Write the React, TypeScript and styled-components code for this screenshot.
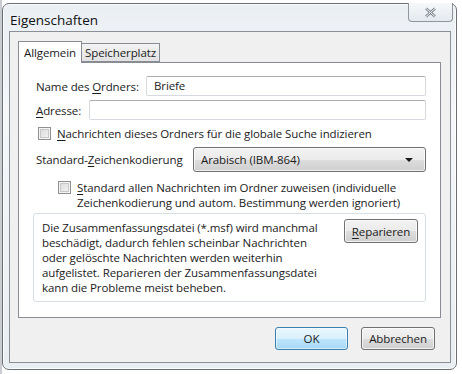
import styled, { createGlobalStyle } from "styled-components";

const GlobalStyle = createGlobalStyle`
  html, body {
    margin: 0;
    padding: 0;
    background: #ffffff;
  }
  body {
    font-family: "Open Sans", "Noto Sans", "Liberation Sans", sans-serif;
    font-size: 11.5px;
    letter-spacing: -0.1px;
    color: #1b1b1b;
  }
`;

const Screen = styled.div`
  width: 462px;
  height: 374px;
  overflow: hidden;
  background: linear-gradient(90deg, #c9ccd0 0, #c9ccd0 2px, #ffffff 2px);
  padding: 3px 0 0 2px;
  box-sizing: border-box;
`;

const Frame = styled.div`
  width: 455px;
  height: 367px;
  box-sizing: border-box;
  border: 1px solid #6b6f74;
  border-radius: 7px;
  background: linear-gradient(180deg, #eaeff4 0%, #f5f7f9 30%, #e9eef2 100%);
  box-shadow: inset 0 0 0 1px rgba(255, 255, 255, 0.8);
  display: flex;
  flex-direction: column;
`;

const TitleBar = styled.div`
  height: 27px;
  display: flex;
  align-items: flex-start;
  justify-content: space-between;
`;

const Title = styled.div`
  padding: 7px 0 0 7px;
  font-size: 13.5px;
  letter-spacing: 0;
  color: #111;
`;

const CloseButton = styled.div`
  width: 45px;
  height: 19px;
  margin-right: 3px;
  margin-top: -1px;
  box-sizing: border-box;
  border: 1px solid #8e959c;
  border-top: none;
  border-radius: 0 0 4px 4px;
  background: linear-gradient(180deg, #f6f8fa, #e4e9ee);
  display: flex;
  align-items: center;
  justify-content: center;
`;

const Client = styled.div`
  flex: 1;
  margin: 0 5px 6px 6px;
  border: 1px solid #8a9096;
  background: #f0f0f0;
  padding: 9px 10px 0 8px;
  display: flex;
  flex-direction: column;
`;

const TabStrip = styled.div`
  display: flex;
  align-items: flex-end;
  height: 21px;
  position: relative;
  z-index: 1;
`;

const Tab = styled.div<{ $active?: boolean; $w: number }>`
  box-sizing: border-box;
  width: ${(p) => p.$w}px;
  height: ${(p) => (p.$active ? "22px" : "19px")};
  margin-bottom: ${(p) => (p.$active ? "-1px" : "0")};
  padding-top: ${(p) => (p.$active ? "2px" : "0")};
  border: 1px solid #898c95;
  border-bottom: ${(p) => (p.$active ? "none" : "1px solid #898c95")};
  border-left: ${(p) => (p.$active ? "1px solid #898c95" : "none")};
  background: ${(p) =>
    p.$active ? "#ffffff" : "linear-gradient(180deg, #f3f3f3, #e2e2e2)"};
  text-align: center;
  line-height: 17px;
`;

const Panel = styled.div`
  width: 423px;
  height: 256px;
  box-sizing: border-box;
  border: 1px solid #898c95;
  background: #ffffff;
  padding: 13px 14px 0 14px;
  display: flex;
  flex-direction: column;
`;

const FieldRow = styled.div<{ $mt?: number }>`
  display: flex;
  align-items: center;
  margin-top: ${(p) => p.$mt ?? 0}px;
  padding-left: 3px;
`;

const Label = styled.span<{ $w: number }>`
  width: ${(p) => p.$w}px;
  flex: none;
  white-space: nowrap;
`;

const U = styled.span`
  text-decoration: underline;
  text-underline-offset: 2px;
`;

const TextInput = styled.div`
  flex: 1;
  height: 20px;
  box-sizing: border-box;
  border: 1px solid #d6dae0;
  border-top-color: #abadb3;
  border-radius: 2px;
  background: #fff;
  padding-left: 7px;
  line-height: 18px;
`;

const CheckRow = styled.div<{ $indent: number; $mt: number }>`
  display: flex;
  align-items: flex-start;
  margin-top: ${(p) => p.$mt}px;
  padding-left: ${(p) => p.$indent}px;
  gap: 6px;
  line-height: 15px;
`;

const Box = styled.span`
  width: 13px;
  height: 13px;
  flex: none;
  box-sizing: border-box;
  border: 1px solid #8e8f8f;
  margin-top: 1px;
  background: linear-gradient(135deg, #d8d8d8, #f6f6f6);
  box-shadow: inset 0 0 0 1px #f4f4f4, inset 0 0 0 2px #c8c8c8;
`;

const SelectBox = styled.div`
  flex: 1;
  height: 25px;
  box-sizing: border-box;
  border: 1px solid #707070;
  border-radius: 3px;
  background: linear-gradient(180deg, #f2f2f2 0%, #ebebeb 50%, #dddddd 51%, #cfcfcf 100%);
  box-shadow: inset 0 0 0 1px rgba(255, 255, 255, 0.7);
  display: flex;
  align-items: center;
  justify-content: space-between;
  padding: 0 12px 0 7px;
`;

const Arrow = styled.span`
  width: 0;
  height: 0;
  border-left: 4px solid transparent;
  border-right: 4px solid transparent;
  border-top: 4px solid #1b1b1b;
`;

const InfoGroup = styled.div`
  margin-top: 3px;
  height: 89px;
  box-sizing: border-box;
  border: 1px solid #d5dfe5;
  border-radius: 3px;
  display: flex;
  justify-content: space-between;
  align-items: flex-start;
  padding: 5px 7px 0 8px;
  line-height: 15px;
`;

const InfoText = styled.div`
  padding-top: 1px;
  white-space: nowrap;
`;

const Button = styled.div<{ $default?: boolean; $w: number; $h?: number }>`
  width: ${(p) => p.$w}px;
  height: ${(p) => p.$h ?? 23}px;
  box-sizing: border-box;
  border: 1px solid ${(p) => (p.$default ? "#3c7fb1" : "#707070")};
  border-radius: 3px;
  background: ${(p) =>
    p.$default
      ? "linear-gradient(180deg, #eaf6fd 0%, #d9f0fc 50%, #bee6fd 51%, #a7d9f5 100%)"
      : "linear-gradient(180deg, #f2f2f2 0%, #ebebeb 50%, #dddddd 51%, #cfcfcf 100%)"};
  box-shadow: inset 0 0 0 1px
    ${(p) => (p.$default ? "rgba(255,255,255,0.5)" : "rgba(255,255,255,0.7)")};
  display: flex;
  align-items: center;
  justify-content: center;
  flex: none;
`;

const Footer = styled.div`
  display: flex;
  justify-content: flex-end;
  gap: 13px;
  padding: 9px 5px 0 0;
`;

export default function App() {
  return (
    <>
      <GlobalStyle />
      <Screen>
        <Frame>
          <TitleBar>
            <Title>Eigenschaften</Title>
            <CloseButton>
              <svg width="13" height="11" viewBox="0 0 13 11">
                <path
                  d="M2 1.5 L6.5 5.5 L11 1.5 M2 9.5 L6.5 5.5 L11 9.5"
                  stroke="#7d838a"
                  strokeWidth="2.6"
                  fill="none"
                />
                <path
                  d="M2 1.5 L6.5 5.5 L11 1.5 M2 9.5 L6.5 5.5 L11 9.5"
                  stroke="#f4f6f8"
                  strokeWidth="1"
                  fill="none"
                />
              </svg>
            </CloseButton>
          </TitleBar>
          <Client>
            <TabStrip>
              <Tab $active $w={64}>
                Allgemein
              </Tab>
              <Tab $w={78}>Speicherplatz</Tab>
            </TabStrip>
            <Panel>
              <FieldRow>
                <Label $w={110}>
                  Name des <U>O</U>rdners:
                </Label>
                <TextInput>Briefe</TextInput>
              </FieldRow>
              <FieldRow $mt={4}>
                <Label $w={53}>
                  <U>A</U>dresse:
                </Label>
                <TextInput />
              </FieldRow>
              <CheckRow $indent={5} $mt={6}>
                <Box />
                <span>
                  <U>N</U>achrichten dieses Ordners für die globale Suche indizieren
                </span>
              </CheckRow>
              <FieldRow $mt={6}>
                <Label $w={157}>
                  Standard-<U>Z</U>eichenkodierung
                </Label>
                <SelectBox>
                  <span>Arabisch (IBM-864)</span>
                  <Arrow />
                </SelectBox>
              </FieldRow>
              <CheckRow $indent={25} $mt={8}>
                <Box />
                <span>
                  <U>S</U>tandard allen Nachrichten im Ordner zuweisen (individuelle
                  <br />
                  Zeichenkodierung und autom. Bestimmung werden ignoriert)
                </span>
              </CheckRow>
              <InfoGroup>
                <InfoText>
                  Die Zusammenfassungsdatei (*.msf) wird manchmal
                  <br />
                  beschädigt, dadurch fehlen scheinbar Nachrichten
                  <br />
                  oder gelöschte Nachrichten werden weiterhin
                  <br />
                  aufgelistet. Reparieren der Zusammenfassungsdatei
                  <br />
                  kann die Probleme meist beheben.
                </InfoText>
                <Button $w={74} $h={24}>
                  <U>R</U>eparieren
                </Button>
              </InfoGroup>
            </Panel>
            <Footer>
              <Button $default $w={73}>
                OK
              </Button>
              <Button $w={74}>Abbrechen</Button>
            </Footer>
          </Client>
        </Frame>
      </Screen>
    </>
  );
}
